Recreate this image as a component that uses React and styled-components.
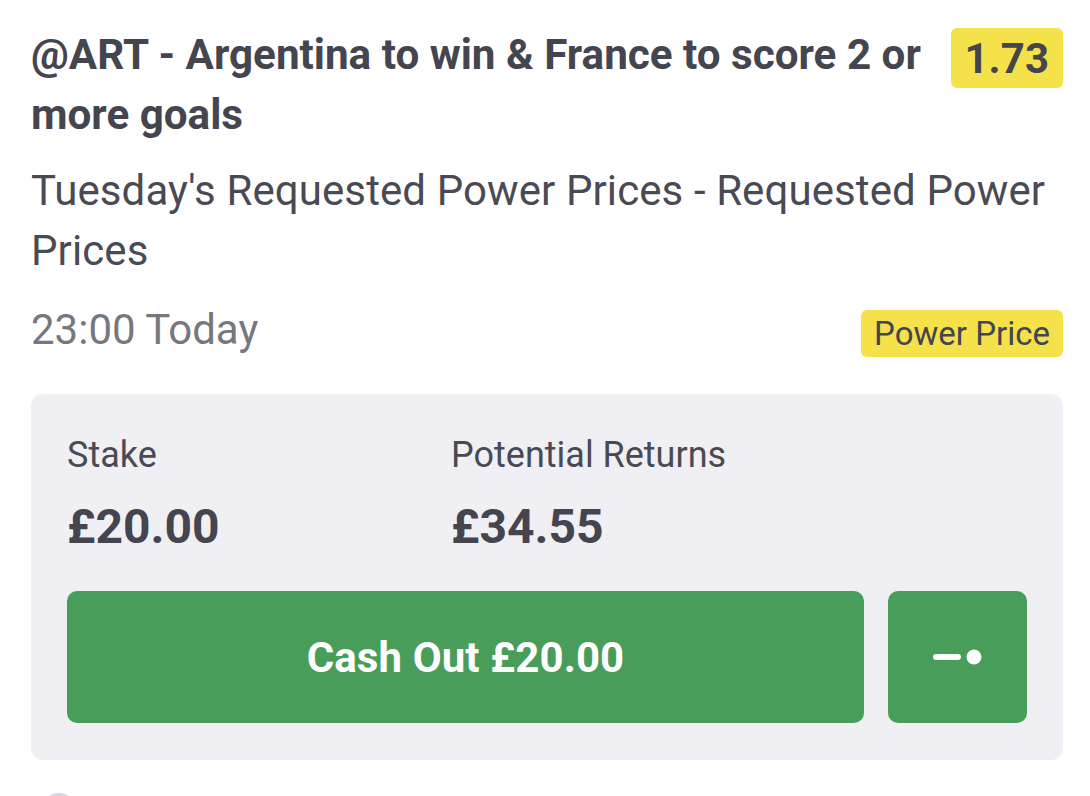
import styled, { createGlobalStyle } from "styled-components";

const Global = createGlobalStyle`
  html, body {
    margin: 0;
    padding: 0;
    background: #ffffff;
  }
  body {
    font-family: Roboto, "Liberation Sans", sans-serif;
    color: #45454f;
  }
`;

const Page = styled.div`
  width: 1090px;
  height: 796px;
  overflow: hidden;
  box-sizing: border-box;
  padding: 25px 27px 0 31px;
`;

const Header = styled.div`
  display: flex;
  align-items: flex-start;
  gap: 16px;
`;

const Title = styled.h1`
  flex: 1;
  margin: 0;
  font-size: 42.2px;
  line-height: 60px;
  font-weight: 700;
  color: #45454f;
`;

const Badge = styled.span`
  flex-shrink: 0;
  display: flex;
  align-items: center;
  background: #f5e14a;
  border-radius: 6px;
  color: #45454f;
  height: ${({h}) => h};
  font-size: ${({size}) => size};
  font-weight: ${({weight}) => weight};
  padding: 0 ${({padx}) => padx};
  margin-top: ${({top}) => top};
`;

const Subtitle = styled.p`
  margin: 16px 0 0;
  font-size: 42px;
  line-height: 60px;
  letter-spacing: 0.1px;
  color: #4a4a54;
`;

const MetaRow = styled.div`
  display: flex;
  justify-content: space-between;
  align-items: flex-start;
  margin-top: 19px;
`;

const Time = styled.span`
  font-size: 42px;
  line-height: 60px;
  color: #77777f;
`;

const Card = styled.div`
  margin-top: 34px;
  background: #f0f0f4;
  border-radius: 12px;
  padding: 39px 36px 37px;
`;

const Stats = styled.div`
  display: grid;
  grid-template-columns: 384px 1fr;
`;

const Stat = styled.div`
  display: flex;
  flex-direction: column;
`;

const Label = styled.span`
  font-size: 36px;
  line-height: 44px;
  color: #4a4a54;
`;

const Amount = styled.span`
  margin-top: 22px;
  font-size: 48px;
  line-height: 56px;
  font-weight: 700;
  color: #45454f;
`;

const Actions = styled.div`
  display: flex;
  gap: 24px;
  margin-top: 36px;
`;

const Button = styled.button`
  height: 132px;
  border: none;
  border-radius: 10px;
  background: #479d59;
  color: #ffffff;
  font-family: Roboto, "Liberation Sans", sans-serif;
  font-size: 42px;
  font-weight: 700;
  letter-spacing: 0.1px;
  display: flex;
  align-items: center;
  justify-content: center;
  flex: ${({grow}) => grow};
  width: ${({w}) => w};
  padding: 0;
`;

const Peek = styled.div`
  margin: 33px 0 0 10px;
  width: 36px;
  height: 36px;
  border-radius: 50%;
  border: 3px solid #d6d6dc;
  box-sizing: border-box;
`;

function SliderIcon() {
  return (
    <svg width="49" height="16" viewBox="0 0 49 16">
      <rect x="0" y="5" width="28" height="6" rx="3" fill="#fff" />
      <circle cx="41" cy="8" r="7.5" fill="#fff" />
    </svg>
  );
}

export default function App() {
  return (
    <>
      <Global />
      <Page>
        <Header>
          <Title>@ART - Argentina to win &amp; France to score 2 or more goals</Title>
          <Badge h="60px" size="42px" weight={700} padx="14px" top="3px">1.73</Badge>
        </Header>
        <Subtitle>Tuesday's Requested Power Prices - Requested Power Prices</Subtitle>
        <MetaRow>
          <Time>23:00 Today</Time>
          <Badge h="47px" size="33px" weight={400} padx="13px" top="10px">Power Price</Badge>
        </MetaRow>
        <Card>
          <Stats>
            <Stat>
              <Label>Stake</Label>
              <Amount>£20.00</Amount>
            </Stat>
            <Stat>
              <Label>Potential Returns</Label>
              <Amount>£34.55</Amount>
            </Stat>
          </Stats>
          <Actions>
            <Button grow="1">Cash Out £20.00</Button>
            <Button w="139px"><SliderIcon /></Button>
          </Actions>
        </Card>
        <Peek />
      </Page>
    </>
  );
}
